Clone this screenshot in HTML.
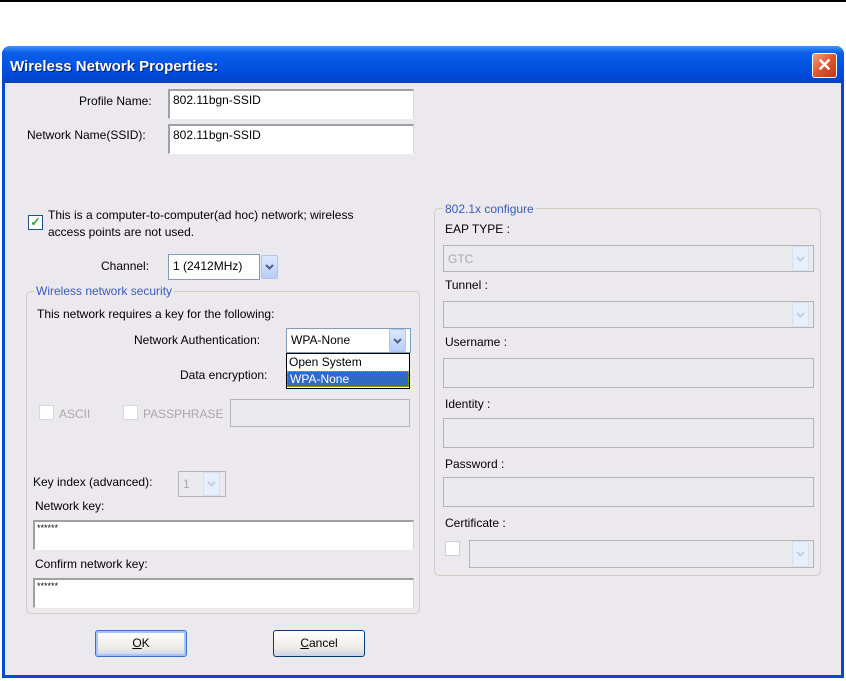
<!DOCTYPE html>
<html><head><meta charset="utf-8"><style>
*{margin:0;padding:0;box-sizing:border-box}
body{width:846px;height:681px;background:#fff;position:relative;overflow:hidden;font-family:"Liberation Sans",sans-serif;font-size:12px;color:#000}
.a{position:absolute;white-space:nowrap}
.inp{position:absolute;background:#fff;border:1px solid #7f9db9;border-right-color:#d8d8d8;border-bottom-color:#fff;border-top:2px solid #a0a0a0;border-left:2px solid #a0a0a0;padding:2px 3px;font-size:12px}
.dis{position:absolute;background:#ebeaed;border:1px solid #b4b4b4}
.btn{position:absolute;width:17px;background:linear-gradient(#dde8fd,#b8cdf6);border:1px solid #b0c4ec;border-radius:2px;display:flex;align-items:center;justify-content:center}
.dbtn{position:absolute;width:17px;background:#e6effc;border:1px solid #d6e0f2;display:flex;align-items:center;justify-content:center}
.grp{position:absolute;border:1px solid #d0d0bf;border-radius:5px}
.leg{position:absolute;background:#ebe9ed;color:#3a5bbd;padding:0 2px}
.cb{position:absolute;width:15px;height:15px;background:#fff;border:1px solid #c8c8c8}
.pb{position:absolute;width:92px;height:27px;border:1px solid #003c74;border-radius:3px;background:linear-gradient(#fff,#eceae6 70%,#c9d3e8);text-align:center;line-height:25px}
</style></head><body>
<svg width="0" height="0" style="position:absolute"><defs>
<symbol id="ch" viewBox="0 0 9 6"><path d="M1 1 L4.5 4.5 L8 1" fill="none" stroke-width="2"/></symbol></defs></svg>
<div class="a" style="left:0;top:0;width:846px;height:2px;background:#000"></div>
<div class="a" style="left:2px;top:46px;width:842px;height:632px;background:#0a46d8;border-radius:8px 8px 0 0"></div>
<div class="a" style="left:2px;top:46px;width:842px;height:37px;border-radius:8px 8px 0 0;background:linear-gradient(#3d95ff 0%,#0a5fe8 18%,#0254e4 50%,#0047d6 85%,#0a3fc0 100%)"></div>
<div class="a" style="left:10px;top:58px;color:#fff;font-weight:bold;font-size:15px;text-shadow:1px 1px #0a1e6e">Wireless Network Properties:</div>
<div class="a" style="left:812px;top:53px;width:25px;height:25px;border:1px solid #fff;border-radius:3px;background:linear-gradient(135deg,#f0a080,#e0552a 50%,#c23a10);color:#fff;font-weight:bold;font-size:18px;text-align:center;line-height:22px">✕</div>
<div class="a" style="left:5px;top:83px;width:836px;height:592px;background:#ebe9ed"></div>

<div class="a" style="left:79px;top:94px">Profile Name:</div>
<div class="inp" style="left:168px;top:89px;width:246px;height:30px">802.11bgn-SSID</div>
<div class="a" style="left:27px;top:128px">Network Name(SSID):</div>
<div class="inp" style="left:168px;top:124px;width:246px;height:30px">802.11bgn-SSID</div>

<div class="cb" style="left:28px;top:215px;border:1px solid #1c5180;color:#21a121;font-size:12px;line-height:13px;text-align:center;font-weight:bold">✓</div>
<div class="a" style="left:48px;top:207px;line-height:17px">This is a computer-to-computer(ad hoc) network; wireless<br>access points are not used.</div>

<div class="a" style="left:101px;top:259px">Channel:</div>
<div class="inp" style="left:168px;top:254px;width:92px;height:26px;border:1px solid #7f9db9;padding:4px 4px">1 (2412MHz)</div>
<div class="btn" style="left:261px;top:255px;height:24px"><svg width="9" height="6" stroke="#4d6185"><use href="#ch"/></svg></div>

<div class="grp" style="left:26px;top:291px;width:394px;height:323px"></div>
<div class="leg" style="left:34px;top:284px">Wireless network security</div>
<div class="a" style="left:37px;top:307px">This network requires a key for the following:</div>
<div class="a" style="left:134px;top:333px">Network Authentication:</div>
<div class="inp" style="left:286px;top:328px;width:125px;height:25px;border:1px solid #7f9db9;padding:4px 4px">WPA-None</div>
<div class="btn" style="left:389px;top:329px;height:23px"><svg width="9" height="6" stroke="#4d6185"><use href="#ch"/></svg></div>
<div class="a" style="left:180px;top:368px">Data encryption:</div>
<div class="a" style="left:286px;top:353px;width:124px;height:36px;background:#fff;border:1px solid #000">
<div style="padding:1px 2px;height:17px">Open System</div>
<div style="background:#316ac5;color:#fff;padding:0 2px;height:16px;border:1px dotted #c0a000">WPA-None</div></div>

<div class="cb" style="left:39px;top:405px;border-color:#d8d8d8"></div>
<div class="a" style="left:59px;top:407px;color:#a8a8a8">ASCII</div>
<div class="cb" style="left:123px;top:405px;border-color:#d8d8d8"></div>
<div class="a" style="left:143px;top:407px;color:#a8a8a8">PASSPHRASE</div>
<div class="dis" style="left:230px;top:399px;width:180px;height:28px"></div>

<div class="a" style="left:33px;top:475px">Key index (advanced):</div>
<div class="dis" style="left:178px;top:471px;width:48px;height:26px;color:#aaa;padding:5px 4px">1</div>
<div class="dbtn" style="left:203px;top:472px;height:24px"><svg width="9" height="6" stroke="#c4cfe0"><use href="#ch"/></svg></div>
<div class="a" style="left:35px;top:499px">Network key:</div>
<div class="inp" style="left:33px;top:520px;width:381px;height:30px;font-size:9px;padding:1px 2px">******</div>
<div class="a" style="left:35px;top:557px">Confirm network key:</div>
<div class="inp" style="left:33px;top:578px;width:381px;height:30px;font-size:9px;padding:1px 2px">******</div>

<div class="pb" style="left:95px;top:630px;border-color:#3c6fc8;box-shadow:inset 0 0 0 2px #a8c4f4"><u>O</u>K</div>
<div class="pb" style="left:273px;top:630px"><u>C</u>ancel</div>

<div class="grp" style="left:434px;top:208px;width:387px;height:368px"></div>
<div class="leg" style="left:443px;top:202px">802.1x configure</div>
<div class="a" style="left:445px;top:222px">EAP TYPE :</div>
<div class="dis" style="left:443px;top:245px;width:371px;height:27px;color:#aaa;padding:6px 4px">GTC</div>
<div class="dbtn" style="left:792px;top:246px;height:25px"><svg width="9" height="6" stroke="#c4cfe0"><use href="#ch"/></svg></div>
<div class="a" style="left:445px;top:278px">Tunnel :</div>
<div class="dis" style="left:443px;top:301px;width:371px;height:27px"></div>
<div class="dbtn" style="left:792px;top:302px;height:25px"><svg width="9" height="6" stroke="#c4cfe0"><use href="#ch"/></svg></div>
<div class="a" style="left:445px;top:335px">Username :</div>
<div class="dis" style="left:443px;top:358px;width:371px;height:30px"></div>
<div class="a" style="left:445px;top:397px">Identity :</div>
<div class="dis" style="left:443px;top:418px;width:371px;height:30px"></div>
<div class="a" style="left:445px;top:457px">Password :</div>
<div class="dis" style="left:443px;top:477px;width:371px;height:30px"></div>
<div class="a" style="left:445px;top:516px">Certificate :</div>
<div class="cb" style="left:445px;top:541px;border-color:#d0d0d0"></div>
<div class="dis" style="left:469px;top:540px;width:345px;height:28px"></div>
<div class="dbtn" style="left:792px;top:541px;height:26px"><svg width="9" height="6" stroke="#c4cfe0"><use href="#ch"/></svg></div>
</body></html>
